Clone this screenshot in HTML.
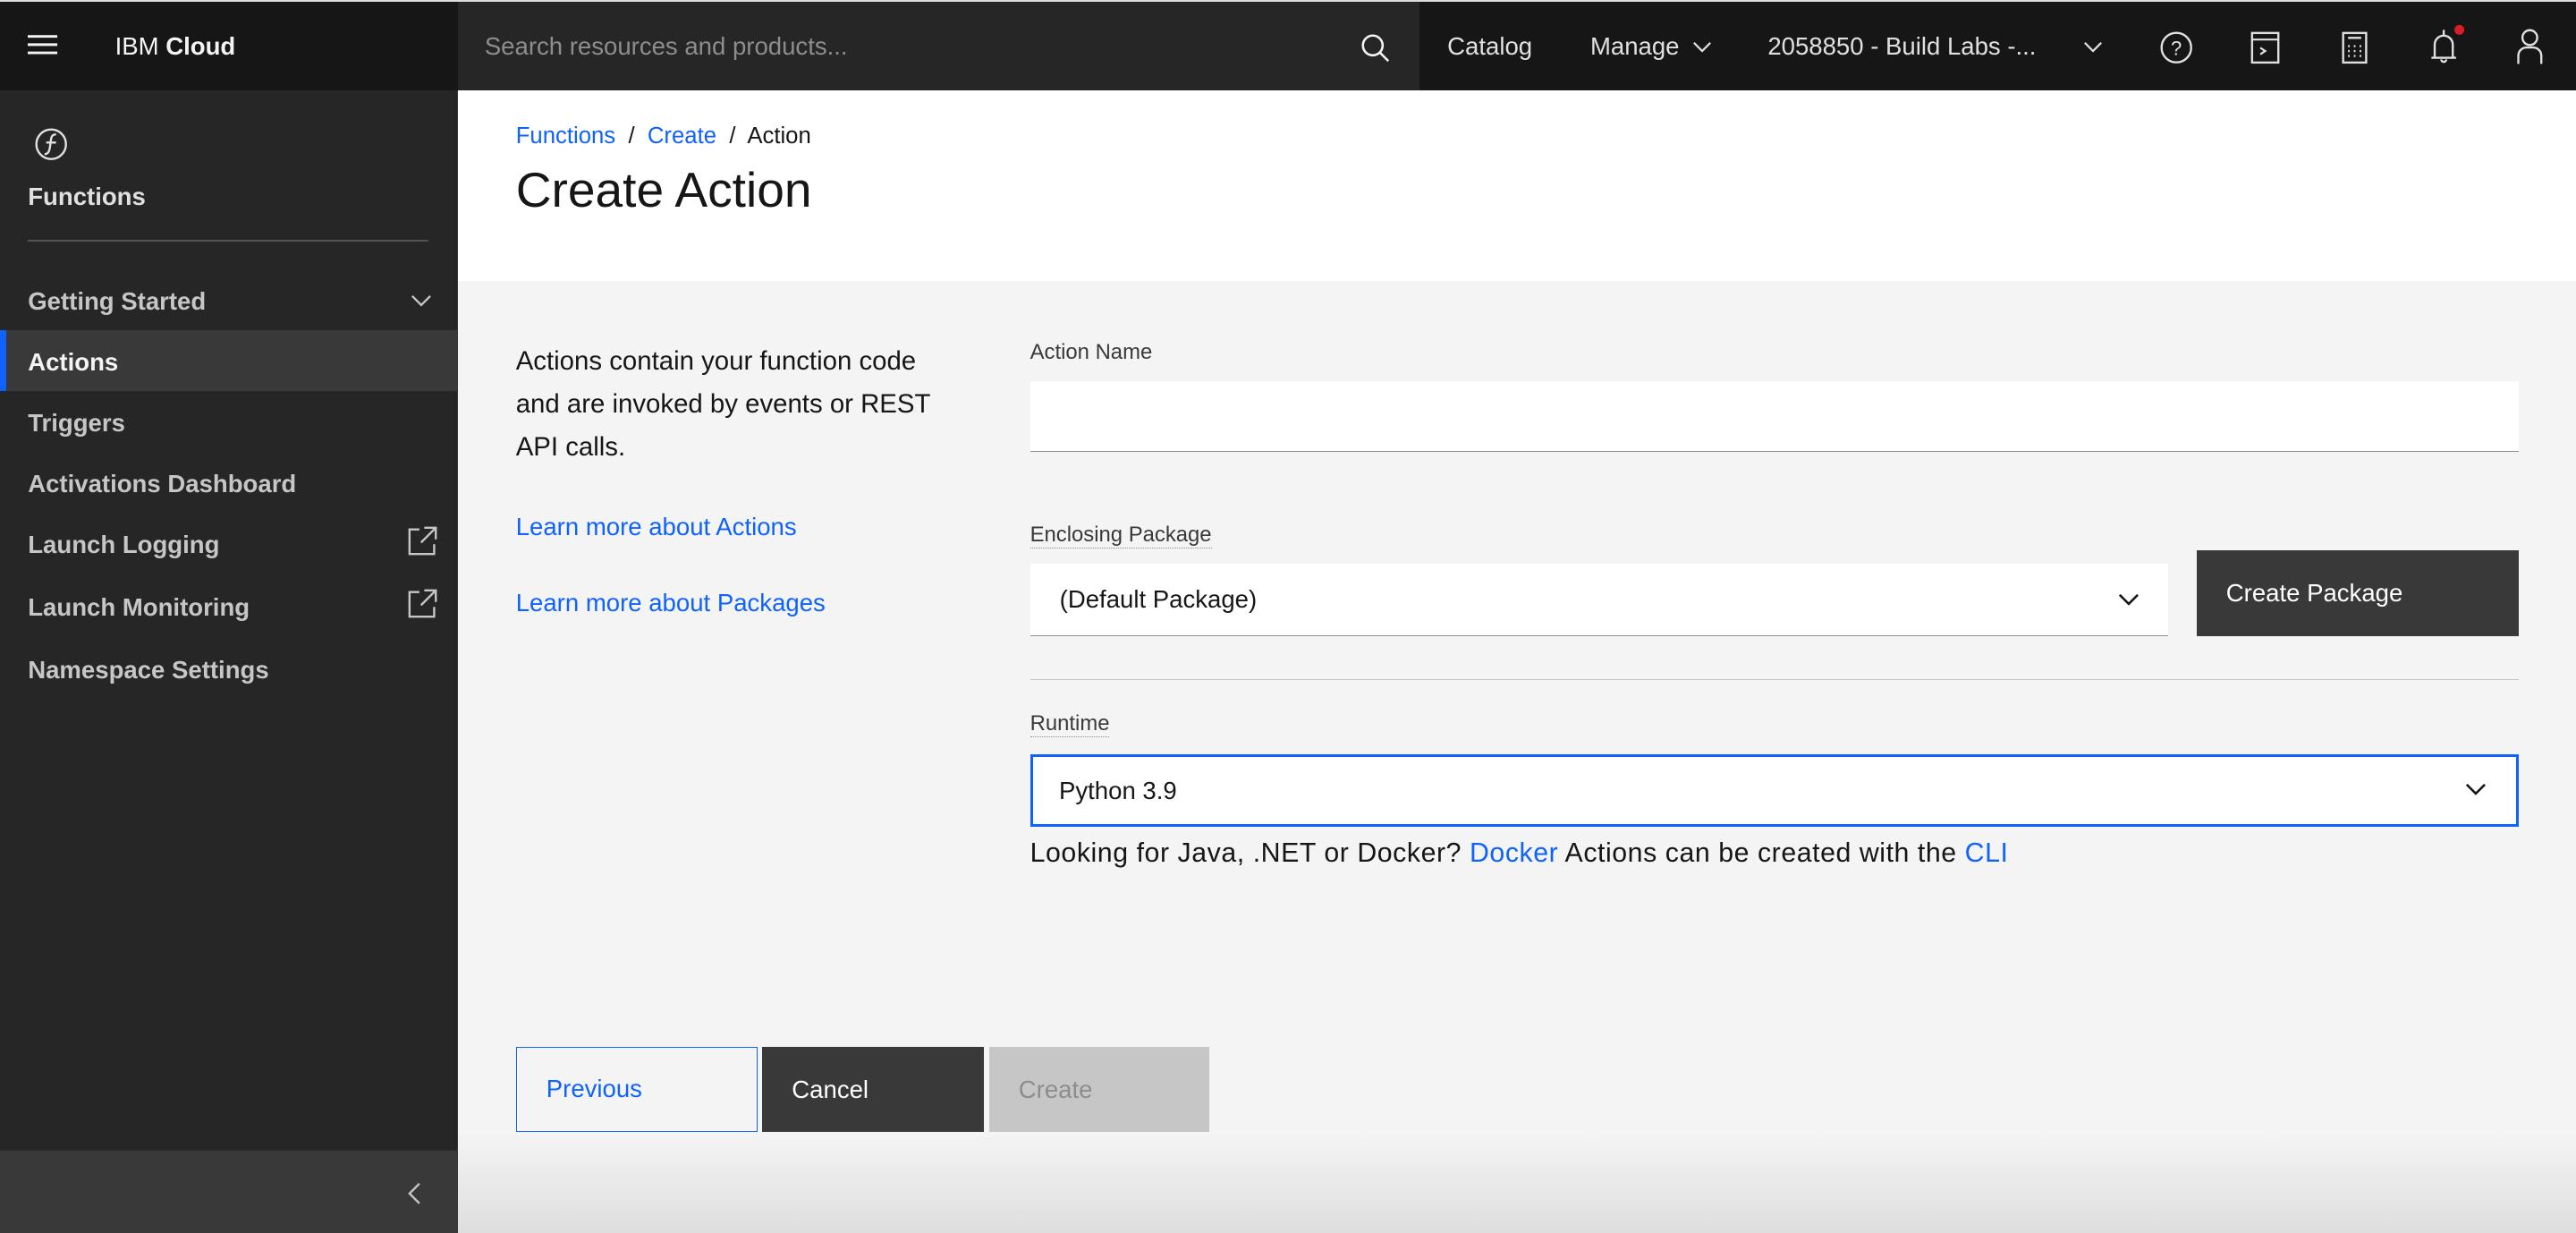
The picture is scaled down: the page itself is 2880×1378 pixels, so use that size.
<!DOCTYPE html>
<html><head><meta charset="utf-8">
<style>
*{box-sizing:border-box;margin:0;padding:0}
html,body{width:2880px;height:1378px;overflow:hidden;background:#e8e8e8}
#root{zoom:1.83673;width:1568px;height:750px;position:relative;font-family:"Liberation Sans",sans-serif;background:#f4f4f4;overflow:hidden}
.hdr{position:absolute;left:0;top:1px;width:1568px;height:54px;background:#161616;color:#f4f4f4}
.hdr .search{position:absolute;left:279px;top:0;width:585px;height:54px;background:#262626;color:#8d8d8d;font-size:15px;line-height:54px;padding-left:16px}
.hdr .t{position:absolute;top:0;line-height:54px;font-size:15px;color:#e0e0e0}
.side{position:absolute;left:0;top:55px;width:278px;height:695px;background:#262626;color:#c6c6c6}
.side .it{position:absolute;left:17px;font-size:15px;font-weight:bold;color:#c6c6c6}
.side .act{position:absolute;left:0;top:146px;width:278px;height:37px;background:#393939;border-left:4px solid #0f62fe}
.side .bot{position:absolute;left:0;top:645px;width:278px;height:50px;background:#393939}
.top{position:absolute;left:279px;top:55px;width:1289px;height:116px;background:#fff}
a,.lnk{color:#0f62fe;text-decoration:none}
.lbl{position:absolute;font-size:13px;color:#393939}
.inp{position:absolute;background:#fff;border-bottom:1px solid #8d8d8d}
.txt{position:absolute;font-size:15px;color:#161616}
.btn{position:absolute;top:637px;height:52px;font-size:15px;line-height:52px;padding-left:18px}
</style></head><body><div id="root">
<div style="position:absolute;left:0;top:0;width:1568px;height:1px;background:#ddd"></div>
<div class="hdr">
 <svg style="position:absolute;left:17px;top:19px" width="19" height="16"><path d="M0 2h18M0 7h18M0 12h18" stroke="#f4f4f4" stroke-width="1.6"/></svg>
 <div class="t" style="left:70px;color:#f4f4f4">IBM <b>Cloud</b></div>
 <div class="search">Search resources and products...</div>
 <svg style="position:absolute;left:828px;top:19px" width="18" height="18"><circle cx="7.5" cy="7.5" r="6" fill="none" stroke="#f4f4f4" stroke-width="1.4"/><path d="M12 12l5 5" stroke="#f4f4f4" stroke-width="1.4"/></svg>
 <div class="t" style="left:881px">Catalog</div>
 <div class="t" style="left:968px">Manage</div>
 <svg style="position:absolute;left:1030px;top:24px" width="12" height="8"><path d="M1 1l5 5 5-5" fill="none" stroke="#e0e0e0" stroke-width="1.2"/></svg>
 <div class="t" style="left:1076px">2058850 - Build Labs -...</div>
 <svg style="position:absolute;left:1268px;top:24px" width="12" height="8"><path d="M1 1l5 5 5-5" fill="none" stroke="#e0e0e0" stroke-width="1.2"/></svg>
 <svg style="position:absolute;left:1314px;top:17px" width="22" height="22"><circle cx="11" cy="11" r="9" fill="none" stroke="#e0e0e0" stroke-width="1.3"/><text x="11" y="15.5" font-size="12" text-anchor="middle" fill="#e0e0e0" font-family="Liberation Sans">?</text></svg>
 <svg style="position:absolute;left:1370px;top:18px" width="18" height="20"><rect x="1" y="1" width="16" height="18" fill="none" stroke="#e0e0e0" stroke-width="1.3"/><path d="M1 5h16M6 10l3 2-3 2" fill="none" stroke="#e0e0e0" stroke-width="1.2"/></svg>
 <svg style="position:absolute;left:1424px;top:18px" width="18" height="20"><rect x="2" y="1" width="14" height="18" fill="none" stroke="#e0e0e0" stroke-width="1.3"/><path d="M5 4h8M5 9h1M8.5 9h1M12 9h1M5 12h1M8.5 12h1M12 12h1M5 15h1M8.5 15h1M12 15h1" stroke="#e0e0e0" stroke-width="1.3"/></svg>
 <svg style="position:absolute;left:1476px;top:13px" width="26" height="26"><path d="M4 21h15M6 21v-8a5.5 5.5 0 0 1 11 0v8M11.5 4v3M10 22a1.5 1.5 0 0 0 3 0" fill="none" stroke="#e0e0e0" stroke-width="1.3"/><circle cx="21" cy="4" r="3" fill="#da1e28"/></svg>
 <svg style="position:absolute;left:1530px;top:16px" width="20" height="22"><circle cx="10" cy="6" r="4.5" fill="none" stroke="#e0e0e0" stroke-width="1.3"/><path d="M3 22v-5a5 5 0 0 1 5-5h4a5 5 0 0 1 5 5v5" fill="none" stroke="#e0e0e0" stroke-width="1.3"/></svg>
</div>
<div class="side">
 <svg style="position:absolute;left:20px;top:22px" width="24" height="24"><circle cx="11" cy="11" r="9" fill="none" stroke="#e0e0e0" stroke-width="1.3"/><path d="M14 5c-3 0-3 2-3.5 6s-1 6-3.5 6M8 10h6" fill="none" stroke="#e0e0e0" stroke-width="1.3"/></svg>
 <div class="it" style="top:56px;color:#e0e0e0">Functions</div>
 <div style="position:absolute;left:17px;top:91px;width:244px;height:1px;background:#525252"></div>
 <div class="it" style="top:120px">Getting Started</div>
 <svg style="position:absolute;left:250px;top:124px" width="13" height="8"><path d="M1 1l5.5 5.5L12 1" fill="none" stroke="#c6c6c6" stroke-width="1.3"/></svg>
 <div class="act"></div>
 <div class="it" style="top:157px;color:#f4f4f4">Actions</div>
 <div class="it" style="top:194px">Triggers</div>
 <div class="it" style="top:231px">Activations Dashboard</div>
 <div class="it" style="top:268px">Launch Logging</div>
 <div class="it" style="top:306px">Launch Monitoring</div>
 <div class="it" style="top:344px">Namespace Settings</div>
 <svg style="position:absolute;left:248px;top:265px" width="18" height="18"><path d="M7 2H1v15h15v-6M10 1h7v7M17 1l-9 9" fill="none" stroke="#c6c6c6" stroke-width="1.3"/></svg>
 <svg style="position:absolute;left:248px;top:303px" width="18" height="18"><path d="M7 2H1v15h15v-6M10 1h7v7M17 1l-9 9" fill="none" stroke="#c6c6c6" stroke-width="1.3"/></svg>
 <div class="bot"></div>
 <svg style="position:absolute;left:248px;top:664px" width="8" height="14"><path d="M7 1L1 7l6 6" fill="none" stroke="#c6c6c6" stroke-width="1.3"/></svg>
</div>
<div style="position:absolute;left:278px;top:55px;width:1px;height:695px;background:#393939"></div>
<div class="top">
 <div style="position:absolute;left:35px;top:20px;font-size:14px;color:#161616"><span class="lnk">Functions</span> &nbsp;/&nbsp; <span class="lnk">Create</span> &nbsp;/&nbsp; Action</div>
 <div style="position:absolute;left:35px;top:43px;font-size:30px;color:#161616">Create Action</div>
</div>
<div style="position:absolute;left:279px;top:690px;width:1289px;height:60px;background:linear-gradient(#f4f4f4,#dedede)"></div>
<div class="txt" style="left:314px;top:207px;width:268px;font-size:16px;line-height:26px">Actions contain your function code and are invoked by events or REST API calls.</div>
<div class="txt lnk" style="left:314px;top:312px;color:#0f62fe">Learn more about Actions</div>
<div class="txt lnk" style="left:314px;top:358px;color:#0f62fe">Learn more about Packages</div>
<div class="lbl" style="left:627px;top:207px">Action Name</div>
<div class="inp" style="left:627px;top:232px;width:906px;height:43px"></div>
<div class="lbl" style="left:627px;top:318px;border-bottom:1px dotted #8d8d8d">Enclosing Package</div>
<div class="inp" style="left:627px;top:343px;width:693px;height:44px"><div class="txt" style="left:18px;top:13px">(Default Package)</div>
 <svg style="position:absolute;left:662px;top:18px" width="13" height="8"><path d="M1 1l5.5 5.5L12 1" fill="none" stroke="#161616" stroke-width="1.4"/></svg></div>
<div style="position:absolute;left:1337px;top:335px;width:196px;height:52px;background:#393939;color:#fff;font-size:15px;line-height:52px;padding-left:18px">Create Package</div>
<div style="position:absolute;left:627px;top:413px;width:906px;height:1px;background:#c6c6c6"></div>
<div class="lbl" style="left:627px;top:433px;border-bottom:1px dotted #8d8d8d">Runtime</div>
<div style="position:absolute;left:627px;top:459px;width:906px;height:44px;background:#fff;border:2px solid #0f62fe"><div class="txt" style="left:16px;top:12px">Python 3.9</div>
 <svg style="position:absolute;left:872px;top:16px" width="13" height="8"><path d="M1 1l5.5 5.5L12 1" fill="none" stroke="#161616" stroke-width="1.4"/></svg></div>
<div class="txt" style="left:627px;top:510px;font-size:16.5px;letter-spacing:0.3px">Looking for Java, .NET or Docker? <span class="lnk">Docker</span> Actions can be created with the <span class="lnk">CLI</span></div>
<div class="btn" style="left:314px;width:147px;border:1px solid #0f62fe;color:#0f62fe;line-height:50px">Previous</div>
<div class="btn" style="left:464px;width:135px;background:#393939;color:#fff">Cancel</div>
<div class="btn" style="left:602px;width:134px;background:#c6c6c6;color:#8d8d8d">Create</div>
</div></body></html>
